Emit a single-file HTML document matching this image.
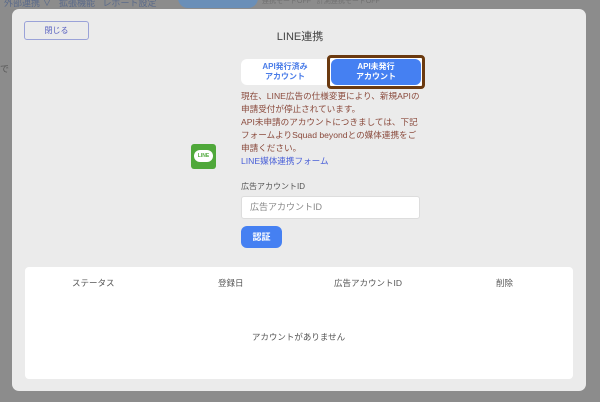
<!DOCTYPE html>
<html><head><meta charset="utf-8"><style>
*{margin:0;padding:0;box-sizing:border-box}
body{width:600px;height:402px;background:#8c8c8c;position:relative;overflow:hidden;font-family:"Liberation Sans","Noto Sans CJK JP",sans-serif}
.abs{position:absolute}
.modal{left:12px;top:9px;width:574px;height:382px;background:#ebebeb;border-radius:7px}
</style></head><body>
<div class="abs" style="left:4px;top:-4px;font-size:9px;color:#5a6a8a;white-space:nowrap">外部連携 ∨ &nbsp;&nbsp;拡張機能 &nbsp;&nbsp;レポート設定</div>
<div class="abs" style="left:178px;top:-12px;width:80px;height:20px;border-radius:10px;background:#6a8fb8"></div>
<div class="abs" style="left:262px;top:-4px;font-size:7px;color:#707070">連携モードOFF &nbsp; 計測連携モードOFF</div>
<div class="abs" style="left:0;top:62px;font-size:9px;color:#555">で</div>
<div class="abs modal"></div>
<div class="abs" style="left:24px;top:21px;width:65px;height:19px;border:1px solid #9aa2d8;border-radius:3px;font-size:8px;color:#5860c0;text-align:center;line-height:17px">閉じる</div>
<div class="abs" style="left:0;top:28px;width:600px;text-align:center;font-size:11px;color:#444">LINE連携</div>
<div class="abs" style="left:241px;top:59px;width:96px;height:26px;background:#fff;border-radius:6px"></div>
<div class="abs" style="left:241px;top:62px;width:88px;text-align:center;font-size:8px;font-weight:bold;color:#4a7ce8;line-height:10px">API発行済み<br>アカウント</div>
<div class="abs" style="left:327px;top:55px;width:98px;height:34px;border:3px solid #6b3a10;border-radius:4px;background:#fff"></div>
<div class="abs" style="left:331px;top:59px;width:90px;height:26px;background:#4580f2;border-radius:6px;color:#fff;font-size:8px;font-weight:bold;text-align:center;line-height:10px;padding-top:3px">API未発行<br>アカウント</div>
<div class="abs" style="left:241px;top:90px;width:200px;font-size:8.6px;line-height:13px;color:#8a4a3c;white-space:nowrap">現在、LINE広告の仕様変更により、新規APIの<br>申請受付が停止されています。<br>API未申請のアカウントにつきましては、下記<br>フォームよりSquad beyondとの媒体連携をご<br>申請ください。</div>
<div class="abs" style="left:241px;top:155px;font-size:8.6px;color:#4a60d8">LINE媒体連携フォーム</div>
<div class="abs" style="left:191px;top:144px;width:25px;height:25px;background:#4fa83a;border-radius:3px"></div>
<div class="abs" style="left:194px;top:150px;width:19px;height:12px;background:#fff;border-radius:7px;font-size:5px;font-weight:bold;color:#4fa83a;text-align:center;line-height:12px">LINE</div>
<div class="abs" style="left:241px;top:181px;font-size:8px;color:#555">広告アカウントID</div>
<div class="abs" style="left:241px;top:196px;width:179px;height:23px;background:#fff;border:1px solid #ddd;border-radius:3px;font-size:9px;color:#888;padding-left:8px;line-height:21px">広告アカウントID</div>
<div class="abs" style="left:241px;top:226px;width:41px;height:22px;background:#4580f2;border-radius:6px;color:#fff;font-size:9px;font-weight:bold;text-align:center;line-height:22px">認証</div>
<div class="abs" style="left:25px;top:267px;width:548px;height:112px;background:#fff;border-radius:4px"></div>
<div class="abs" style="left:72px;top:277px;font-size:8.5px;color:#555">ステータス</div>
<div class="abs" style="left:218px;top:277px;font-size:8.5px;color:#555">登録日</div>
<div class="abs" style="left:334px;top:277px;font-size:8.5px;color:#555">広告アカウントID</div>
<div class="abs" style="left:496px;top:277px;font-size:8.5px;color:#555">削除</div>
<div class="abs" style="left:0;top:331px;width:597px;text-align:center;font-size:8.5px;color:#555">アカウントがありません</div>
</body></html>
